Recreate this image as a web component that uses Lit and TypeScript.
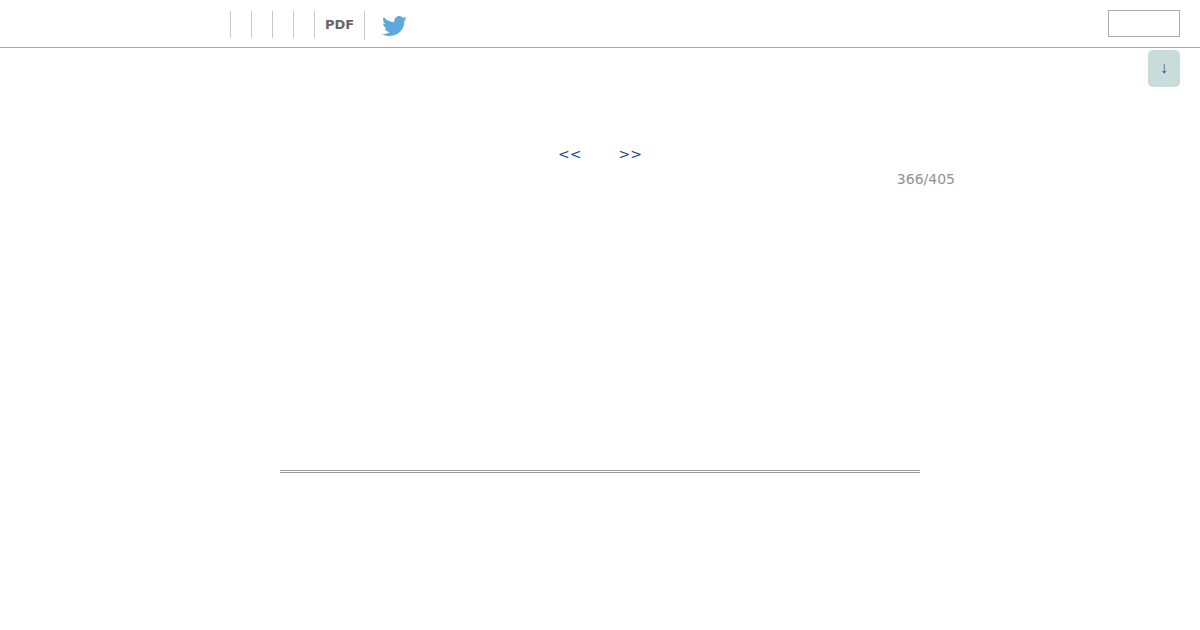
import { LitElement, html, css } from "lit";
import { customElement } from "lit/decorators.js";

@customElement("app-root")
export class AppRoot extends LitElement {
  static styles = css`
    :host { display: block; height: 630px; position: relative; background: #fff; font-family: "DejaVu Sans", sans-serif; overflow: hidden; }
    .top { height: 47px; border-bottom: 1px solid #a6a6a6; display: flex; align-items: center; padding: 0 20px 0 230px; box-sizing: content-box; }
    .nav { display: flex; align-items: flex-start; height: 47px; padding-top: 11px; box-sizing: border-box; }
    .cell { width: 20px; height: 27px; border-left: 1px solid #c8c8c8; }
    .pdf { width: 49px; height: 27px; border-left: 1px solid #c8c8c8; box-sizing: content-box; font-size: 13px; font-weight: 700; color: #666; line-height: 27px; text-align: center; }
    .tw { height: 29px; border-left: 1px solid #c8c8c8; padding-left: 17px; display: flex; align-items: center; }
    .tw svg { width: 25px; height: 21px; display: block; margin-top: 1px; }
    .spacer { flex: 1; }
    .search { width: 70px; height: 25px; border: 1px solid #a9a9a9; margin-top: -1px; background: #fff; }
    .down { position: absolute; left: 1148px; top: 50px; width: 32px; height: 37px; border-radius: 5px; background: #c9dcdc; color: #555; font-family: "Liberation Sans", sans-serif; font-size: 16px; line-height: 36px; text-align: center; }
    .pager { display: flex; justify-content: center; gap: 37px; margin-top: 96px; font-size: 14px; line-height: 21px; color: #1a4a94; }
    .count { width: 955px; text-align: right; margin-top: 4px; font-size: 14px; line-height: 20px; color: #919191; }
    .rule { width: 640px; height: 1px; margin: 281px auto 0; border-top: 1px solid #999; border-bottom: 1px solid #999; }
  `;
  render() {
    return html`
      <div class="top">
        <div class="nav">
          <div class="cell"></div><div class="cell"></div><div class="cell"></div><div class="cell"></div>
          <div class="pdf">PDF</div>
          <div class="tw">
            <svg viewBox="0 0 24 20" preserveAspectRatio="none"><path fill="#5da8dc" d="M24 2.4c-.9.4-1.800.7-2.800.8 1-.6 1.800-1.600 2.200-2.700-1 .6-2 1-3.100 1.200C19.300.7 18 0 16.600 0c-2.700 0-4.900 2.200-4.900 4.900 0 .4 0 .8.100 1.100C7.700 5.800 4.100 3.900 1.700.9c-.4.700-.7 1.600-.7 2.500 0 1.700.9 3.200 2.200 4.100-.8 0-1.600-.2-2.200-.6v.1c0 2.400 1.700 4.400 3.900 4.800-.4.100-.8.200-1.300.2-.3 0-.6 0-.9-.1.600 2 2.400 3.400 4.600 3.400-1.700 1.300-3.800 2.100-6.100 2.100-.4 0-.8 0-1.200-.1C2.200 18.300 4.800 19.100 7.500 19.100c9.100 0 14-7.500 14-14v-.6c1-.7 1.800-1.600 2.500-2.100z"/></svg>
          </div>
        </div>
        <div class="spacer"></div>
        <div class="search"></div>
      </div>
      <div class="down">↓</div>
      <div class="pager"><span>&lt;&lt;</span><span>&gt;&gt;</span></div>
      <div class="count">366/405</div>
      <div class="rule"></div>
    `;
  }
}
